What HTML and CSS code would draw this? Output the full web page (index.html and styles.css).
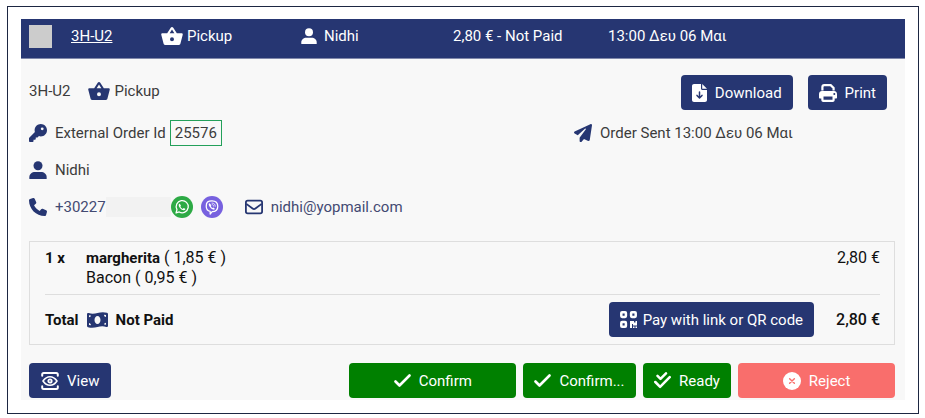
FILE: index.html
```html
<!DOCTYPE html>
<html lang="en">
<head>
<meta charset="utf-8">
<meta name="viewport" content="width=device-width, initial-scale=1">
<title>Order 3H-U2</title>
<link rel="stylesheet" href="styles.css">
</head>
<body>
<svg class="sprite" aria-hidden="true">
  <symbol id="basket" viewBox="0 0 24 22"><path fill-rule="evenodd" d="M12 1c.6 0 1 .3 1.400.8L17.300 8H22.500c1 0 1.500.7 1.300 1.500l-2.500 9.800c-.3 1-1 1.700-2.200 1.700H4.900c-1.200 0-1.900-.7-2.200-1.700L.2 9.500C0 8.700.5 8 1.500 8h5.200l3.900-6.200C11 1.300 11.400 1 12 1zm0 2.900L9.400 8h5.200zM12 12.300a2.200 2.200 0 1 0 0 4.400 2.200 2.200 0 0 0 0-4.400z"/></symbol>
  <symbol id="person" viewBox="0 0 16 16"><circle cx="8" cy="4.200" r="4"/><path d="M.3 16v-1.600c0-2.800 2.300-4.600 5.100-4.600h5.200c2.800 0 5.100 1.800 5.100 4.600V16z"/></symbol>
  <symbol id="key" viewBox="0 0 512 512"><path fill-rule="evenodd" d="M336 352c97 0 176-79 176-176S433 0 336 0 160 79 160 176c0 19 3 37 8 54L7 391c-4 4-7 11-7 17v80c0 13 11 24 24 24h80c13 0 24-11 24-24v-40h40c13 0 24-11 24-24v-40h40c6 0 13-3 17-7l33-33c17 5 35 8 54 8zm40-256a40 40 0 1 1 0 80 40 40 0 1 1 0-80z"/></symbol>
  <symbol id="phone" viewBox="0 0 512 512"><path d="M165 25c-8-19-29-29-48-23L29 26C12 30 0 46 0 64c0 247 201 448 448 448 18 0 34-12 38-29l24-88c6-20-4-41-23-49l-96-40c-17-7-36-2-47 12l-40 49c-71-33-127-90-160-160l49-40c14-12 19-31 12-47z"/></symbol>
  <symbol id="plane" viewBox="0 0 512 512"><path d="M498 6c11 8 16 20 14 33l-64 416c-2 10-8 18-16 23-9 5-19 6-28 2l-120-50-68 74c-9 10-23 13-36 8s-20-17-20-30v-84c0-4 2-8 4-11L332 158c6-6 6-16 0-22s-16-6-22-1L106 317l-88-45C7 267 0 256 0 244s6-23 17-29L465 4c11-6 23-5 33 2z"/></symbol>
  <symbol id="mail" viewBox="0 0 20 16"><rect x="1" y="1" width="18" height="14" rx="2" fill="none" stroke="currentColor" stroke-width="2"/><path d="M1.500 4.500l6.900 5.200q1.600 1.200 3.200 0l6.900-5.200" fill="none" stroke="currentColor" stroke-width="2"/></symbol>
  <symbol id="whatsapp" viewBox="0 0 24 24"><circle cx="12" cy="12" r="12" fill="#2daa45"/><path d="M5.500 18.500l1-3.600a6.600 6.600 0 1 1 2.500 2.500z" fill="none" stroke="#fff" stroke-width="1.400" stroke-linejoin="round"/><path d="M9.800 8.600c-.5-.2-1.500.4-1.400 1.500.3 2.600 3 5.200 5.500 5.500 1.200.1 1.900-.8 1.700-1.600l-1.800-.9-1 1c-1.200-.5-2.100-1.400-2.600-2.500l.7-.9z" fill="#fff"/></symbol>
  <symbol id="viber" viewBox="0 0 24 24"><circle cx="12" cy="12" r="12" fill="#7761df"/><path d="M12 5.300c4.600 0 6.300 1.600 6.300 5.900s-1.700 5.900-6.100 5.900L10 19.600v-2.800c-3-.6-4.300-2.300-4.300-5.600 0-4.300 1.700-5.900 6.300-5.900z" fill="none" stroke="#fff" stroke-width="1.400" stroke-linejoin="round"/><path d="M9.500 8c-.7.100-1.300.8-1 1.700.8 2.300 2.600 4.200 4.900 5.100.9.300 1.500-.3 1.700-1l-1.500-1.300-1 .6c-.9-.4-1.500-1.100-1.800-2l.5-.9z" fill="#fff"/><path d="M12 7.700c2.300 0 3.600 1.300 3.600 3.500M12.200 9.400c1.100 0 1.700.7 1.700 1.700" fill="none" stroke="#fff" stroke-width=".8" stroke-linecap="round"/></symbol>
  <symbol id="download" viewBox="0 0 15 18"><path d="M2 0h7v4.500c0 .8.600 1.500 1.500 1.500H15v10c0 1.100-.9 2-2 2H2c-1.100 0-2-.9-2-2V2C0 .9.900 0 2 0zm8.200 0L15 4.800h-4.800z"/><path d="M7.500 8v5.500M5 11.400L7.500 14l2.500-2.600" fill="none" stroke="#263672" stroke-width="1.500" stroke-linecap="round" stroke-linejoin="round"/></symbol>
  <symbol id="printer" viewBox="0 0 18 18"><path d="M3.400 6.500V3c0-1.100.8-1.900 1.900-1.900h6.400L14.600 4v2.500" fill="none" stroke="currentColor" stroke-width="2.200"/><path fill-rule="evenodd" d="M3 7h12c1.700 0 3 1.300 3 3v3.500c0 .6-.4 1-1 1h-1.300V16c0 1.100-.9 2-2 2H4.300c-1.100 0-2-.9-2-2v-1.500H1c-.6 0-1-.4-1-1V10c0-1.700 1.300-3 3-3zm1.500 5.600v3.200h9v-3.200zM15.300 9a1 1 0 1 0 0 2 1 1 0 0 0 0-2z"/></symbol>
  <symbol id="cash" viewBox="0 0 21 16"><path fill-rule="evenodd" d="M0 2.300C0 1.400.8.800 1.700 1.100c3 1 5.900.7 8.800-.1C13.500.100 16.700-.300 20 .800c.7.200 1 .7 1 1.400v11.500c0 .9-.8 1.500-1.700 1.200-3-1-5.900-.7-8.800.1-3 .9-6.200 1.300-9.500.2-.7-.2-1-.7-1-1.400zM10.500 4C8.800 4 7.500 5.800 7.500 8s1.300 4 3 4 3-1.800 3-4-1.300-4-3-4zM2 3.300v1.900c1 0 1.900-.8 1.900-1.700zM2 11v2l2 .3C4 12 3 11 2 11zM19 5V2.900l-2-.2C17 4 18 5 19 5zm0 7.800v-2c-1 0-1.900.8-1.900 1.800z"/></symbol>
  <symbol id="qr" viewBox="0 0 17 17"><g fill="none" stroke="currentColor" stroke-width="2.500"><rect x="1.300" y="1.300" width="4.600" height="4.600" rx=".8"/><rect x="11.100" y="1.300" width="4.600" height="4.600" rx=".8"/><rect x="1.300" y="11.100" width="4.600" height="4.600" rx=".8"/></g><path d="M10 10h4v1.500h1.500V10H17v4.500h-4V13h-1v4h-2zM13 15.500h1.500V17H13zM15.500 15.500H17V17h-1.500z"/></symbol>
  <symbol id="view" viewBox="0 0 18 18"><g fill="none" stroke="currentColor" stroke-width="2" stroke-linecap="round" stroke-linejoin="round"><path d="M1.200 3.800V2.600c0-.9.600-1.500 1.500-1.500h12.600c.9 0 1.500.6 1.500 1.500v1.200M1.200 14.200v1.200c0 .9.600 1.500 1.500 1.500h12.600c.9 0 1.500-.6 1.500-1.500v-1.200"/><path d="M2 9Q5 4.700 9 4.700T16 9Q13 13.300 9 13.300T2 9z" stroke-width="1.600"/><circle cx="9" cy="9" r="1.700" stroke-width="1.800"/></g></symbol>
  <symbol id="check" viewBox="0 0 17 13"><path d="M1.500 7.500l4 4L15.500 1.500" fill="none" stroke="currentColor" stroke-width="2.600" stroke-linecap="round" stroke-linejoin="round"/></symbol>
  <symbol id="checks" viewBox="0 0 17 17"><path d="M3.500 3.800l3 3L12 1.300M1.300 10l4.800 4.800L15.700 5.200" fill="none" stroke="currentColor" stroke-width="2.500" stroke-linecap="round" stroke-linejoin="round"/></symbol>
  <symbol id="reject" viewBox="0 0 19 19"><circle cx="9.500" cy="9.500" r="9.500"/><path d="M7 7l5 5M12 7l-5 5" fill="none" stroke="#f96e6c" stroke-width="1.500" stroke-linecap="round"/></symbol>
</svg>

<main class="frame">
  <article class="order">
    <header class="bar">
      <input class="pick" type="checkbox" aria-label="Select order 3H-U2">
      <a class="code" href="#details">3H-U2</a>
      <span class="label"><svg class="icon wide"><use href="#basket"/></svg>Pickup</span>
      <span class="label roomy"><svg class="icon user"><use href="#person"/></svg>Nidhi</span>
      <span>2,80 € - Not Paid</span>
      <span>13:00 Δευ 06 Μαι</span>
    </header>

    <div class="body" id="details">
      <div class="top">
        <span>3H-U2</span>
        <span class="label"><svg class="icon wide"><use href="#basket"/></svg>Pickup</span>
        <div class="tools">
          <button class="btn" type="button"><svg class="icon file"><use href="#download"/></svg>Download</button>
          <button class="btn" type="button"><svg class="icon"><use href="#printer"/></svg>Print</button>
        </div>
      </div>

      <div class="facts">
        <div class="fact">
          <svg class="icon"><use href="#key"/></svg>
          <span>External Order Id</span>
          <span class="ext">25576</span>
        </div>
        <div class="fact">
          <svg class="icon"><use href="#plane"/></svg>
          <span>Order Sent 13:00 Δευ 06 Μαι</span>
        </div>
      </div>

      <div class="fact person"><svg class="icon"><use href="#person"/></svg><span>Nidhi</span></div>

      <div class="fact contact">
        <svg class="icon"><use href="#phone"/></svg>
        <span class="number"><a class="link" href="tel:+30227">+30227</a><span class="mask"></span></span>
        <span class="chats">
          <a href="#whatsapp-chat" aria-label="WhatsApp"><svg class="icon round"><use href="#whatsapp"/></svg></a>
          <a href="#viber-chat" aria-label="Viber"><svg class="icon round"><use href="#viber"/></svg></a>
        </span>
        <a class="link mail" href="mailto:nidhi@yopmail.com"><svg class="icon"><use href="#mail"/></svg>nidhi@yopmail.com</a>
      </div>

      <section class="bill">
        <div class="item">
          <b class="qty">1 x</b>
          <div class="name"><b>margherita</b> ( 1,85 € )<br>Bacon ( 0,95 € )</div>
          <span>2,80 €</span>
        </div>
        <div class="total">
          <b>Total</b>
          <svg class="icon note"><use href="#cash"/></svg>
          <b>Not Paid</b>
          <button class="btn pay" type="button"><svg class="icon small"><use href="#qr"/></svg>Pay with link or QR code</button>
          <strong>2,80 €</strong>
        </div>
      </section>

      <footer class="actions">
        <button class="btn" type="button"><svg class="icon"><use href="#view"/></svg>View</button>
        <div class="decide">
          <button class="btn green" type="button"><svg class="icon tick"><use href="#check"/></svg>Confirm</button>
          <button class="btn green" type="button"><svg class="icon tick"><use href="#check"/></svg>Confirm...</button>
          <button class="btn green" type="button"><svg class="icon small"><use href="#checks"/></svg>Ready</button>
          <button class="btn red" type="button"><svg class="icon"><use href="#reject"/></svg>Reject</button>
        </div>
      </footer>
    </div>
  </article>
</main>
</body>
</html>
```
FILE: styles.css
```css
:root {
  --navy: #263672;
  --green: #008000;
  --red: #f96e6c;
}

* { box-sizing: border-box; }

body {
  margin: 0;
  padding: 6px 6px 4px 7px;
  background: #fff;
  color: #3c3c3c;
  font: 15px/20px Roboto, "Liberation Sans", sans-serif;
}

a { color: inherit; text-decoration: none; }

.sprite { display: none; }

.icon {
  flex: none;
  width: 18px;
  height: 18px;
  fill: currentColor;
}
.icon.wide { width: 22px; height: 20px; }
.icon.user { width: 16px; height: 16px; }
.icon.file { width: 15px; }
.icon.note { width: 21px; height: 16px; color: var(--navy); }
.icon.small { width: 17px; height: 17px; }
.icon.tick { width: 17px; height: 13px; }
.icon.round { display: block; width: 22px; height: 22px; }

.frame {
  border: 1px solid #1d2742;
  padding: 12px 13px 13px;
}

.order { background: #f8f8f8; }

.bar {
  display: grid;
  grid-template-columns: 42px 90fr 140fr 152fr 155fr 297fr;
  align-items: center;
  height: 40px;
  padding: 0 0 6px 8px;
  border-bottom: 1px solid #8088aa;
  background: var(--navy);
  color: #fff;
}

.pick {
  appearance: none;
  width: 23px;
  height: 23px;
  margin: 2px 0 0;
  background: #ccc;
}

.code { text-decoration: underline; }

.label { display: flex; align-items: center; gap: 4px; }
.label.roomy { gap: 7px; }

.body { padding: 16px 10px 2px 8px; }
.body .icon.wide { color: var(--navy); }

.top {
  display: flex;
  align-items: flex-start;
  gap: 18px;
  padding-right: 8px;
  line-height: 32px;
}
.tools { display: flex; gap: 15px; margin-left: auto; }

.btn {
  display: flex;
  align-items: center;
  justify-content: center;
  gap: 8px;
  height: 35px;
  padding: 0 12px;
  border: 0;
  border-radius: 4px;
  background: var(--navy);
  color: #fff;
  font: inherit;
  font-size: 15px;
  line-height: 20px;
  white-space: nowrap;
}
.tools .btn { padding: 0 11px; }

.facts {
  display: grid;
  grid-template-columns: 545fr 321fr;
  margin-top: 10px;
}

.fact { display: flex; align-items: center; gap: 8px; }
.fact > .icon { color: var(--navy); }

.ext {
  margin-left: -4px;
  padding: 2px 4px;
  border: 1px solid #23a05a;
}

.person { margin-top: 14px; }
.contact { margin-top: 16px; }
.link { color: #434a72; }
.number { display: flex; }
.mask { width: 65px; background: #f2f2f2; }
.chats { display: flex; gap: 8px; margin-left: -8px; }
.mail { display: flex; align-items: center; gap: 8px; margin-left: 14px; }
.mail .icon { color: var(--navy); }

.bill {
  margin-top: 23px;
  padding: 6px 14px 7px 15px;
  border: 1px solid #dedede;
  color: #111;
  font-size: 16px;
}
.bill b { font-size: 15px; font-weight: 700; }
.bill strong { font-weight: 500; }

.item {
  display: flex;
  padding-bottom: 6px;
  border-bottom: 1px solid #dedede;
}
.qty { width: 41px; }
.name { flex: 1; }

.total {
  display: flex;
  align-items: center;
  gap: 8px;
  padding-top: 7px;
}
.pay { gap: 6px; padding: 0 11px; margin: 0 14px 0 auto; }

.actions {
  display: flex;
  justify-content: space-between;
  margin-top: 18px;
}
.decide {
  display: grid;
  grid-template-columns: 166fr 112fr 88fr 156fr;
  gap: 7px;
  width: 63%;
}
.decide .btn { padding: 0 8px; }
.green { background: var(--green); }
.red { background: var(--red); }
```
